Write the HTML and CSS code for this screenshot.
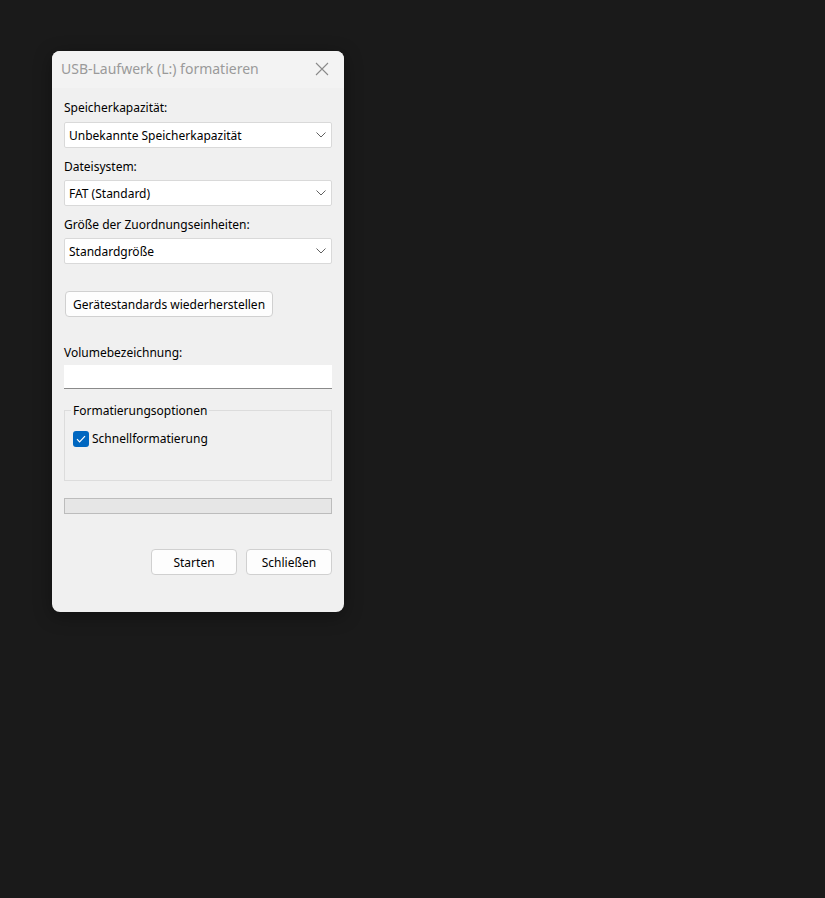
FILE: index.html
```html
<!DOCTYPE html>
<html lang="de">
<head>
<meta charset="utf-8">
<title>USB-Laufwerk (L:) formatieren</title>
<link rel="stylesheet" href="styles.css">
</head>
<body>
<div class="window">
  <div class="titlebar">
    <span class="title">USB-Laufwerk (L:) formatieren</span>
    <svg class="close" width="14" height="14" viewBox="0 0 14 14"><path d="M1 1L13 13M13 1L1 13" stroke="#8a8a8a" stroke-width="1.1" fill="none"/></svg>
  </div>
  <div class="content">
    <div class="label">Speicherkapazität:</div>
    <div class="combo"><span>Unbekannte Speicherkapazität</span><svg class="chev" width="10" height="6" viewBox="0 0 10 6"><path d="M0.5 0.5L5 5L9.5 0.5" stroke="#606060" stroke-width="1" fill="none"/></svg></div>
    <div class="label">Dateisystem:</div>
    <div class="combo"><span>FAT (Standard)</span><svg class="chev" width="10" height="6" viewBox="0 0 10 6"><path d="M0.5 0.5L5 5L9.5 0.5" stroke="#606060" stroke-width="1" fill="none"/></svg></div>
    <div class="label">Größe der Zuordnungseinheiten:</div>
    <div class="combo"><span>Standardgröße</span><svg class="chev" width="10" height="6" viewBox="0 0 10 6"><path d="M0.5 0.5L5 5L9.5 0.5" stroke="#606060" stroke-width="1" fill="none"/></svg></div>
    <div class="btn restore">Gerätestandards wiederherstellen</div>
    <div class="label vol">Volumebezeichnung:</div>
    <div class="textbox"></div>
    <div class="group">
      <span class="legend">Formatierungsoptionen</span>
      <div class="check-row">
        <span class="checkbox"><svg width="10" height="8" viewBox="0 0 10 8"><path d="M1 4.2L3.6 6.8L9 1.2" stroke="#fff" stroke-width="1.2" fill="none"/></svg></span>
        <span>Schnellformatierung</span>
      </div>
    </div>
    <div class="progress"></div>
    <div class="actions">
      <div class="btn action">Starten</div>
      <div class="btn action">Schließen</div>
    </div>
  </div>
</div>
</body>
</html>
```
FILE: styles.css
```css
html, body {
  margin: 0;
  padding: 0;
  background: #1a1a1a;
  width: 825px;
  height: 898px;
  overflow: hidden;
}
body {
  font-family: "Noto Sans", "Liberation Sans", Arial, sans-serif;
  font-size: 12px;
  color: #000;
}
.window {
  margin: 51px 0 0 52px;
  width: 292px;
  height: 561px;
  background: #f0f0f0;
  border-radius: 8px;
  overflow: hidden;
  box-shadow: 0 4px 18px rgba(0,0,0,0.35);
  display: flex;
  flex-direction: column;
}
.titlebar {
  height: 37px;
  background: #f3f3f3;
  display: flex;
  align-items: center;
  justify-content: space-between;
  padding: 0 15px 0 9px;
  flex-shrink: 0;
}
.title {
  font-size: 14px;
  color: #9a9a9a;
  position: relative;
  top: -1px;
}
.close {
  position: relative;
  top: -1px;
}
.content {
  display: flex;
  flex-direction: column;
  padding: 0 12px;
}
.label {
  height: 15px;
  line-height: 15px;
  margin-top: 11px;
  margin-bottom: 6px;
}
.content > .label:first-child { margin-top: 12px; margin-bottom: 7px; }
.combo {
  height: 24px;
  background: #fff;
  border: 1px solid #d9d9d9;
  border-radius: 2px;
  display: flex;
  align-items: center;
  justify-content: space-between;
  padding: 0 5px 0 4px;
}
.btn {
  background: #fdfdfd;
  border: 1px solid #d0d0d0;
  border-radius: 4px;
  display: flex;
  align-items: center;
  justify-content: center;
  height: 24px;
}
.restore {
  margin-top: 27px;
  margin-left: 1px;
  width: 206px;
}
.vol { margin-top: 28px; margin-bottom: 5px; }
.textbox {
  height: 23px;
  background: #fff;
  border-bottom: 1px solid #8a8a8a;
}
.group {
  margin-top: 21px;
  height: 69px;
  border: 1px solid #dcdcdc;
  position: relative;
}
.legend {
  position: absolute;
  top: -8px;
  left: 6px;
  padding: 0 2px;
  background: #f0f0f0;
  line-height: 15px;
}
.check-row {
  display: flex;
  align-items: center;
  margin: 19px 0 0 8px;
  gap: 3px;
}
.checkbox {
  width: 16px;
  height: 16px;
  background: #0067c0;
  border-radius: 3px;
  display: flex;
  align-items: center;
  justify-content: center;
}
.progress {
  margin-top: 17px;
  height: 14px;
  background: #e6e6e6;
  border: 1px solid #bcbcbc;
}
.actions {
  display: flex;
  justify-content: flex-end;
  gap: 9px;
  margin-top: 35px;
}
.action {
  width: 84px;
  height: 24px;
}
```
